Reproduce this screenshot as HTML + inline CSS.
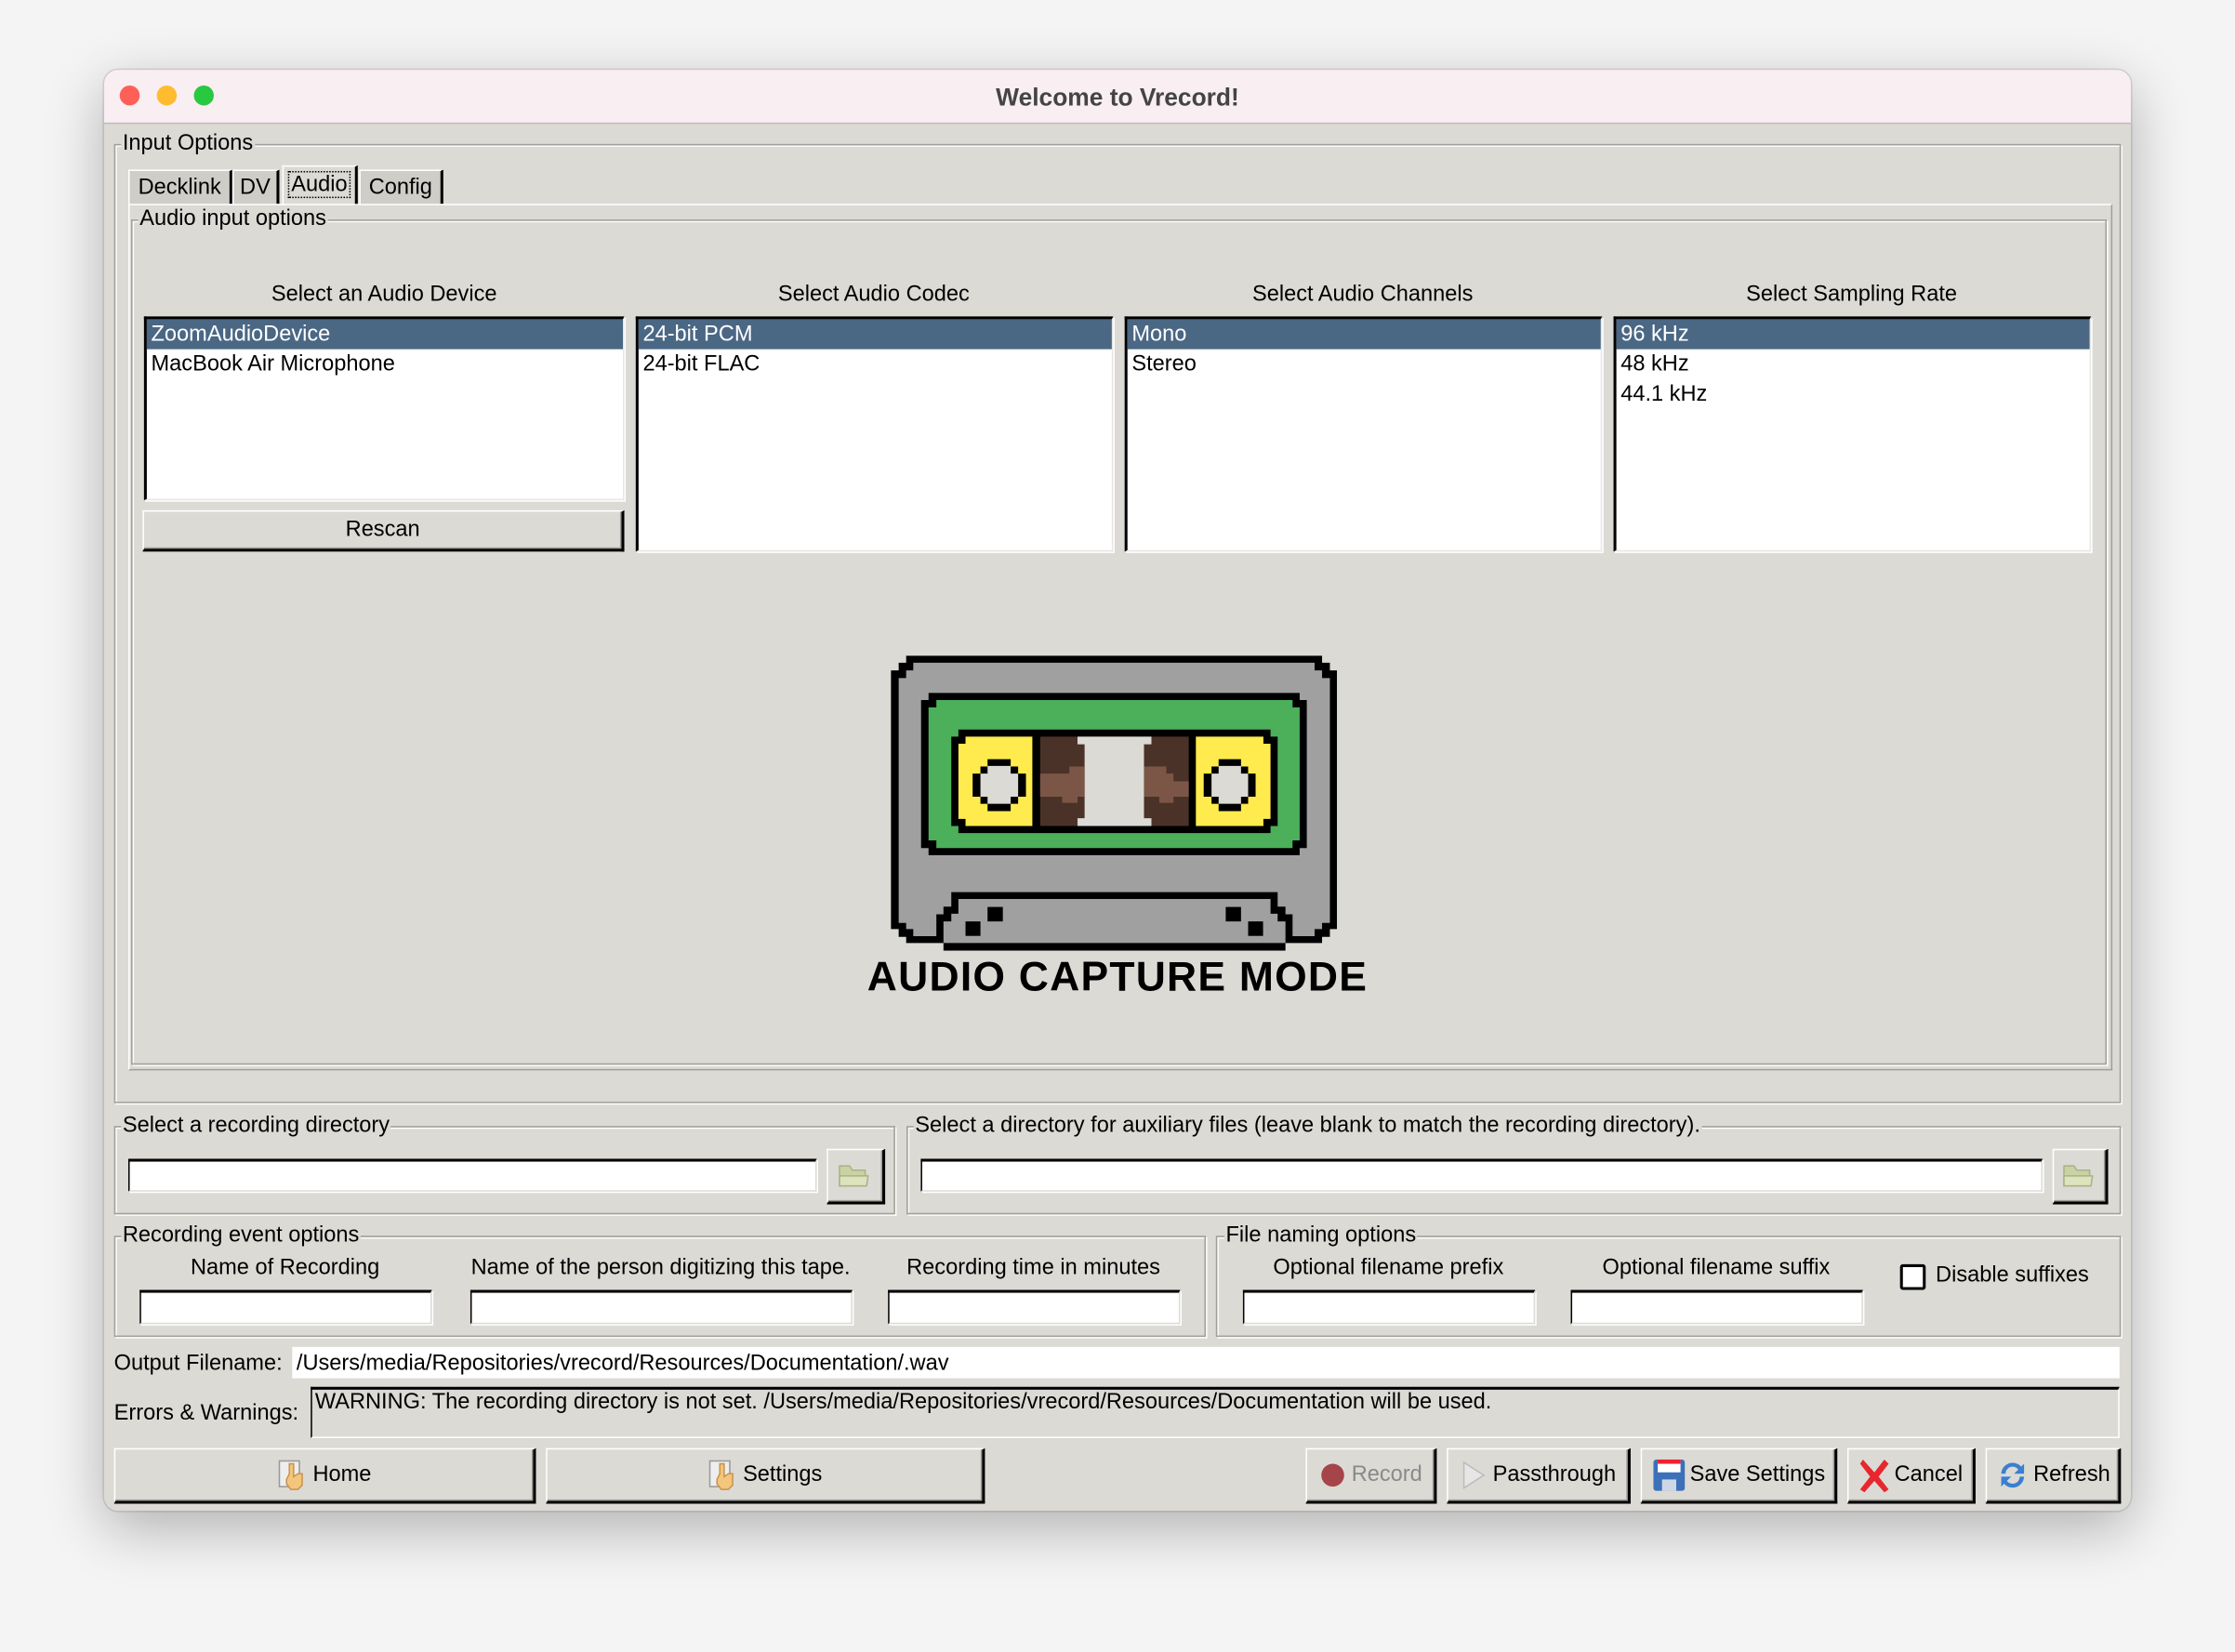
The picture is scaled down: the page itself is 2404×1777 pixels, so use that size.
<!DOCTYPE html>
<html><head><meta charset="utf-8"><style>
html,body{margin:0;padding:0;width:2404px;height:1776px;overflow:hidden;background:#f4f4f4;}
#s{position:absolute;left:0;top:0;width:1568px;height:1159px;transform:scale(1.53316);transform-origin:0 0;font-family:"Liberation Sans",sans-serif;font-size:15.4px;color:#000;}
.a{position:absolute;}
.win{left:73px;top:49px;width:1422px;height:1011px;border-radius:10px;background:#dcdad5;box-shadow:0 12px 40px rgba(0,0,0,0.28),0 0 0 1px rgba(0,0,0,0.12);overflow:hidden;}
.tb{left:0;top:0;width:1422px;height:37px;background:#f9eef2;border-bottom:1px solid #bdbab6;}
.grp{position:absolute;border:1px solid #a29f99;box-shadow:inset 1px 1px 0 #fff,1px 1px 0 #fff;}
.lbl{position:absolute;background:#dcdad5;padding:0 1px;line-height:17px;white-space:nowrap;}
.t{position:absolute;white-space:nowrap;line-height:17px;}
.lb{position:absolute;background:#fff;border-top:2px solid #000;border-left:2px solid #000;border-right:1px solid #e8e6e2;border-bottom:1px solid #e8e6e2;box-shadow:1px 1px 0 #fff;}
.row{height:21px;line-height:21px;padding-left:3px;white-space:nowrap;}
.sel{background:#4a6784;color:#fff;}
.en{position:absolute;background:#fff;border-top:2px solid #000;border-left:1px solid #000;border-right:1px solid #dcdad5;border-bottom:1px solid #dcdad5;box-shadow:1px 1px 0 #fff;}
.bt{position:absolute;background:#dcdad5;border-top:1px solid #fff;border-left:1px solid #fff;border-right:2px solid #000;border-bottom:2px solid #000;box-shadow:inset -1px -1px 0 #9d9a95;display:flex;align-items:center;justify-content:center;white-space:nowrap;box-sizing:border-box;}
.bt svg{margin-right:3px;}
.tab{position:absolute;top:119px;height:24px;line-height:24px;background:#cfcdc8;border-top:1px solid #fff;border-left:1px solid #fff;border-right:2px solid #000;text-align:center;box-sizing:border-box;}
</style></head><body><div id="s">
<div class="a win">
 <div class="a tb"></div>
 <div class="a" style="left:11px;top:11px;width:14px;height:14px;border-radius:7px;background:#fe5f57"></div>
 <div class="a" style="left:37px;top:11px;width:14px;height:14px;border-radius:7px;background:#febc2e"></div>
 <div class="a" style="left:63px;top:11px;width:14px;height:14px;border-radius:7px;background:#28c840"></div>
 <div class="t" style="left:0;width:1422px;top:9px;text-align:center;font-weight:bold;font-size:17.2px;color:#444;line-height:20px">Welcome to Vrecord!</div>
</div>
<div class="a" style="left:73px;top:49px;width:1422px;height:1011px;">
<div style="position:absolute;left:-73px;top:-49px;width:1568px;height:1159px;">
 <div class="grp" style="left:80px;top:101px;width:1406px;height:671px"></div>
 <div class="lbl" style="left:85px;top:92px">Input Options</div>
 <div class="tab" style="left:90px;width:73px">Decklink</div>
 <div class="tab" style="left:163px;width:33px">DV</div>
 <div class="tab" style="left:198px;top:116px;height:28px;width:53px;background:#dcdad5;line-height:26px"><span style="outline:1px dotted #000;padding:0 1px">Audio</span></div>
 <div class="tab" style="left:252px;width:59px">Config</div>
 <div class="a" style="left:90px;top:143px;width:1390px;height:606px;border-top:1px solid #fff;border-left:1px solid #fff;border-right:1px solid #a29f99;border-bottom:1px solid #a29f99"></div>
 <div class="grp" style="left:92px;top:154px;width:1384px;height:591px"></div>
 <div class="lbl" style="left:97px;top:145px">Audio input options</div>

 <div class="t" style="left:101px;width:337px;text-align:center;top:198px">Select an Audio Device</div>
 <div class="t" style="left:446px;width:334px;text-align:center;top:198px">Select Audio Codec</div>
 <div class="t" style="left:789px;width:334px;text-align:center;top:198px">Select Audio Channels</div>
 <div class="t" style="left:1132px;width:334px;text-align:center;top:198px">Select Sampling Rate</div>

 <div class="lb" style="left:101px;top:222px;width:334px;height:126px"><div class="row sel">ZoomAudioDevice</div><div class="row">MacBook Air Microphone</div></div>
 <div class="bt" style="left:100px;top:358px;width:338px;height:29px">Rescan</div>
 <div class="lb" style="left:446px;top:222px;width:332px;height:162px"><div class="row sel">24-bit PCM</div><div class="row">24-bit FLAC</div></div>
 <div class="lb" style="left:789px;top:222px;width:332px;height:162px"><div class="row sel">Mono</div><div class="row">Stereo</div></div>
 <div class="lb" style="left:1132px;top:222px;width:332px;height:162px"><div class="row sel">96 kHz</div><div class="row">48 kHz</div><div class="row">44.1 kHz</div></div>

 <svg class="a" style="left:625px;top:460px" width="313" height="207" viewBox="150 72 1255 958" preserveAspectRatio="none">
  <polygon fill="#000" points="193,72 1363,72 1363,95 1385,95 1385,120 1405,120 1405,960 1385,960 1385,985 1363,985 1363,1005 1260,1005 1260,1030 298,1030 298,1005 193,1005 193,985 172,985 172,960 150,960 150,120 172,120 172,95 193,95"/>
  <polygon fill="#a0a0a0" points="213,95 1342,95 1342,120 1363,120 1363,145 1385,145 1385,940 1363,940 1363,960 1342,960 1342,983 1280,983 1280,912 1260,912 1260,887 1238,887 1238,840 320,840 320,887 298,887 298,912 278,912 278,983 213,983 213,960 193,960 193,940 172,940 172,145 193,145 193,120 213,120"/>
  <polygon fill="#a0a0a0" points="298,1005 298,935 320,935 320,910 340,910 340,862 1218,862 1218,910 1238,910 1238,935 1260,935 1260,1005"/>
  <rect fill="#000" x="422" y="888" width="43" height="47"/><rect fill="#000" x="360" y="935" width="42" height="47"/>
  <rect fill="#000" x="1092" y="888" width="43" height="47"/><rect fill="#000" x="1155" y="935" width="42" height="47"/>
  <polygon fill="#000" points="256,193 1300,193 1300,216 1320,216 1320,697 1300,697 1300,720 256,720 256,697 235,697 235,216 256,216"/>
  <polygon fill="#4caf5a" points="278,216 1280,216 1280,240 1300,240 1300,672 1280,672 1280,697 278,697 278,672 256,672 256,240 278,240"/>
  <polygon fill="#000" points="340,312 1218,312 1218,335 1238,335 1238,625 1218,625 1218,648 340,648 340,625 320,625 320,335 340,335"/>
  <polygon fill="#ffeb4d" points="360,335 548,335 548,625 360,625 360,602 340,602 340,358 360,358"/>
  <polygon fill="#ffeb4d" points="1008,335 1198,335 1198,358 1218,358 1218,602 1198,602 1198,625 1008,625"/>
  <rect fill="#4a3228" x="570" y="335" width="418" height="290"/>
  <polygon fill="#dcdad5" points="675,335 883,335 883,360 862,360 862,600 883,600 883,625 675,625 675,600 695,600 695,360 675,360"/>
  <polygon fill="#7b5646" points="570,455 652,455 652,432 695,432 695,530 675,530 675,550 632,550 632,530 570,530"/>
  <polygon fill="#7b5646" points="862,432 925,432 925,455 945,455 945,480 988,480 988,530 945,530 945,550 905,550 905,530 862,530"/>
  <polygon fill="#000" points="422,408 487,408 487,432 508,432 508,455 530,455 530,530 508,530 508,553 487,553 487,577 422,577 422,553 402,553 402,530 380,530 380,455 402,455 402,432 422,432"/>
  <polygon fill="#dcdad5" points="422,430 487,430 487,455 508,455 508,530 487,530 487,553 422,553 422,530 402,530 402,455 422,455"/>
  <polygon fill="#000" points="1072,408 1135,408 1135,432 1155,432 1155,455 1176,455 1176,530 1155,530 1155,553 1135,553 1135,577 1072,577 1072,553 1052,553 1052,530 1030,530 1030,455 1052,455 1052,432 1072,432"/>
  <polygon fill="#dcdad5" points="1072,430 1135,430 1135,455 1155,455 1155,530 1135,530 1135,553 1072,553 1072,530 1052,530 1052,455 1072,455"/>
 </svg>
 <div class="t" style="left:560px;width:448px;text-align:center;top:669px;font-weight:bold;font-size:29px;line-height:34px;letter-spacing:0.8px">AUDIO CAPTURE MODE</div>

 <div class="grp" style="left:80px;top:790px;width:546px;height:60px"></div>
 <div class="lbl" style="left:85px;top:781px">Select a recording directory</div>
 <div class="en" style="left:90px;top:813px;width:481px;height:20px"></div>
 <div class="bt" style="left:580px;top:806px;width:41px;height:39px"><svg width="24" height="20" viewBox="0 0 24 20"><path d="M2 3h7l2 3h9v11H2z" fill="#c9d2a4" stroke="#a9b285"/><path d="M2 10h20l-1 7H2z" fill="#dde3bd" stroke="#a9b285"/></svg></div>
 <div class="grp" style="left:636px;top:790px;width:850px;height:60px"></div>
 <div class="lbl" style="left:641px;top:781px">Select a directory for auxiliary files (leave blank to match the recording directory).</div>
 <div class="en" style="left:646px;top:813px;width:785px;height:20px"></div>
 <div class="bt" style="left:1440px;top:806px;width:39px;height:39px"><svg width="24" height="20" viewBox="0 0 24 20"><path d="M2 3h7l2 3h9v11H2z" fill="#c9d2a4" stroke="#a9b285"/><path d="M2 10h20l-1 7H2z" fill="#dde3bd" stroke="#a9b285"/></svg></div>

 <div class="grp" style="left:80px;top:867px;width:764px;height:69px"></div>
 <div class="lbl" style="left:85px;top:858px">Recording event options</div>
 <div class="t" style="left:98px;width:204px;text-align:center;top:881px">Name of Recording</div>
 <div class="t" style="left:320px;width:287px;text-align:center;top:881px">Name of the person digitizing this tape.</div>
 <div class="t" style="left:620px;width:210px;text-align:center;top:881px">Recording time in minutes</div>
 <div class="en" style="left:98px;top:905px;width:203px;height:21px"></div>
 <div class="en" style="left:330px;top:905px;width:266px;height:21px"></div>
 <div class="en" style="left:623px;top:905px;width:203px;height:21px"></div>

 <div class="grp" style="left:853px;top:867px;width:633px;height:69px"></div>
 <div class="lbl" style="left:859px;top:858px">File naming options</div>
 <div class="t" style="left:872px;width:204px;text-align:center;top:881px">Optional filename prefix</div>
 <div class="t" style="left:1102px;width:204px;text-align:center;top:881px">Optional filename suffix</div>
 <div class="en" style="left:872px;top:905px;width:203px;height:21px"></div>
 <div class="en" style="left:1102px;top:905px;width:203px;height:21px"></div>
 <div class="a" style="left:1333px;top:887px;width:14px;height:14px;background:#fff;border:2px solid #000;border-radius:2px"></div>
 <div class="t" style="left:1358px;top:886px">Disable suffixes</div>

 <div class="t" style="left:80px;top:948px">Output Filename:</div>
 <div class="a" style="left:205px;top:945px;width:1282px;height:22px;background:#fff"></div>
 <div class="t" style="left:208px;top:948px">/Users/media/Repositories/vrecord/Resources/Documentation/.wav</div>
 <div class="t" style="left:80px;top:983px">Errors &amp; Warnings:</div>
 <div class="a" style="left:218px;top:973px;width:1267px;height:33px;border-top:2px solid #000;border-left:1px solid #000;border-right:1px solid #fff;border-bottom:1px solid #fff"></div>
 <div class="t" style="left:221px;top:975px">WARNING: The recording directory is not set. /Users/media/Repositories/vrecord/Resources/Documentation will be used.</div>

 <div class="bt" style="left:80px;top:1016px;width:296px;height:39px"><svg width="22" height="22" viewBox="0 0 22 22"><rect x="2" y="1" width="14" height="18" fill="#eee" stroke="#999"/><path d="M9 10v-7h3v9l3-2h3v8l-3 3h-5l-3-4v-3z" fill="#f4c57d" stroke="#c8944a"/></svg>Home</div>
 <div class="bt" style="left:383px;top:1016px;width:308px;height:39px"><svg width="22" height="22" viewBox="0 0 22 22"><rect x="2" y="1" width="14" height="18" fill="#eee" stroke="#999"/><path d="M9 10v-7h3v9l3-2h3v8l-3 3h-5l-3-4v-3z" fill="#f4c57d" stroke="#c8944a"/></svg>Settings</div>
 <div class="bt" style="left:916px;top:1016px;width:92px;height:39px;color:#8a8a8a"><svg width="20" height="20" viewBox="0 0 20 20"><circle cx="10" cy="10" r="8" fill="#a5454a"/></svg>Record</div>
 <div class="bt" style="left:1015px;top:1016px;width:129px;height:39px"><svg width="20" height="22" viewBox="0 0 20 22"><path d="M3 2l14 9-14 9z" fill="#e6e6e6" stroke="#bbb"/></svg>Passthrough</div>
 <div class="bt" style="left:1151px;top:1016px;width:138px;height:39px"><svg width="24" height="24" viewBox="0 0 24 24"><rect x="1" y="1" width="22" height="22" rx="2" fill="#3c70b8"/><rect x="4" y="1" width="16" height="9" fill="#fff"/><rect x="4" y="1" width="16" height="3" fill="#e23"/><rect x="7" y="15" width="10" height="8" fill="#cfd7e6"/></svg>Save Settings</div>
 <div class="bt" style="left:1296px;top:1016px;width:90px;height:39px"><svg width="22" height="26" viewBox="0 0 22 26"><path d="M3 2l8 9 7-9 3 3-7 9 7 9-3 2-7-8-7 8-3-2 7-9-7-9z" fill="#e8262e"/></svg>Cancel</div>
 <div class="bt" style="left:1393px;top:1016px;width:95px;height:39px"><svg width="24" height="24" viewBox="0 0 24 24"><path d="M4 11a8 8 0 0 1 14-5l2-2v7h-7l3-3a5 5 0 0 0-9 3z" fill="#3a7fd0"/><path d="M20 13a8 8 0 0 1-14 5l-2 2v-7h7l-3 3a5 5 0 0 0 9-3z" fill="#3a7fd0"/></svg>Refresh</div>
</div></div>
</div></body></html>
